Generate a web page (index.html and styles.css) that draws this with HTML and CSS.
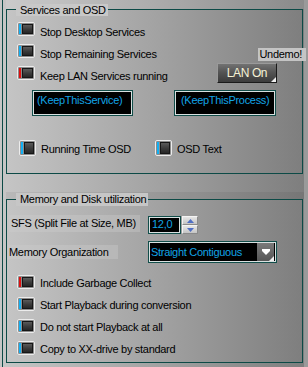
FILE: index.html
```html
<!DOCTYPE html>
<html>
<head>
<meta charset="utf-8">
<link rel="stylesheet" href="styles.css">
</head>
<body>
<div class="frame">
  <div class="band band-top"></div>
  <div class="group group-one">
    <div class="legend">Services and OSD</div>
    <div class="row first-row">
      <span class="cb"></span><span class="lbl">Stop Desktop Services</span>
    </div>
    <div class="row">
      <span class="cb"></span><span class="lbl">Stop Remaining Services</span>
      <span class="undemo">Undemo!</span>
    </div>
    <div class="row">
      <span class="cb red"></span><span class="lbl">Keep LAN Services running</span>
      <span class="lan-btn">LAN On<i class="corner"></i></span>
    </div>
    <div class="keep-row">
      <div class="blackbox keep1">(KeepThisService)</div>
      <div class="blackbox keep2">(KeepThisProcess)</div>
    </div>
    <div class="osd-row">
      <div class="osd-item osd-first"><span class="cb big"></span><span class="lbl">Running Time OSD</span></div>
      <div class="osd-item"><span class="cb big"></span><span class="lbl">OSD Text</span></div>
    </div>
  </div>
  <div class="gap"></div>
  <div class="band band-mid"></div>
  <div class="group group-two">
    <div class="legend legend-two">Memory and Disk utilization</div>
    <div class="field-row sfs-row">
      <span class="flabel sfs-label">SFS (Split File at Size, MB)</span>
      <div class="spin-edit">
        <div class="blackbox spin-val">12,0</div>
        <div class="spin-btns">
          <span class="spin-btn"><svg width="7" height="4" viewBox="0 0 7 4"><polygon points="0,4 3.5,0 7,4" fill="#4f6fc4"/></svg></span>
          <span class="spin-btn"><svg width="7" height="4" viewBox="0 0 7 4"><polygon points="0,0 7,0 3.5,4" fill="#4f6fc4"/></svg></span>
        </div>
      </div>
    </div>
    <div class="field-row mem-row">
      <span class="flabel mem-label">Memory Organization</span>
      <div class="blackbox combo">
        <span class="combo-text">Straight Contiguous</span>
        <span class="combo-btn"><svg width="8" height="6" viewBox="0 0 8 6"><polygon points="0,0 8,0 8,2 4,6 0,2" fill="#ffffff"/></svg><i class="corner"></i></span>
      </div>
    </div>
    <div class="checks">
      <div class="row"><span class="cb red"></span><span class="lbl">Include Garbage Collect</span></div>
      <div class="row"><span class="cb"></span><span class="lbl">Start Playback during conversion</span></div>
      <div class="row"><span class="cb"></span><span class="lbl">Do not start Playback at all</span></div>
      <div class="row"><span class="cb"></span><span class="lbl">Copy to XX-drive by standard</span></div>
    </div>
  </div>
</div>
</body>
</html>
```
FILE: styles.css
```css
html, body {
  margin: 0;
  padding: 0;
}
body {
  width: 308px;
  height: 367px;
  overflow: hidden;
  background: linear-gradient(90deg, #c6c6c6 0px, #a4a4a4 150px, #7e7e7e 304px, #9a9a9a 304px);
  font-family: "Liberation Sans", Arial, sans-serif;
  font-size: 11px;
  letter-spacing: -0.3px;
  color: #000;
  line-height: 13px;
}
.frame {
  margin-left: 2px;
  border-left: 1px solid #0c4a46;
  height: 367px;
  padding-left: 3px;
  box-sizing: border-box;
}
.band {
  width: 298px;
  background: rgba(255, 255, 255, 0.1);
}
.band-top {
  height: 9px;
}
.band-mid {
  height: 7px;
  background: rgba(0, 0, 0, 0.06);
}
.gap {
  height: 18px;
}
.group {
  width: 297px;
  box-sizing: border-box;
  border: 1px solid #0c4a46;
}
.group-one {
  height: 165px;
}
.group-two {
  height: 164px;
}
.legend {
  display: block;
  width: max-content;
  margin-top: -6px;
  margin-left: 9px;
  height: 12px;
  padding: 0 2px 0 4px;
  background: #c8c8c8;
  line-height: 12px;
}
.legend-two {
  margin-top: -7px;
  height: 13px;
  line-height: 13px;
  background: #c6c6c6;
}
.row {
  display: flex;
  align-items: center;
  height: 22px;
  padding-left: 10px;
}
.first-row {
  margin-top: 2px;
}
.lbl {
  margin-left: 5px;
  padding-top: 6px;
  white-space: nowrap;
}
.cb {
  box-sizing: border-box;
  width: 18px;
  height: 14px;
  border: 1px solid #ececec;
  border-radius: 2px;
  background: #8c8c8c;
  display: flex;
  padding: 1px;
  flex: none;
}
.cb::before {
  content: "";
  width: 2px;
  background: #12b0f4;
}
.cb.red::before {
  background: #e01010;
}
.cb::after {
  content: "";
  flex: 1;
  margin-left: 1px;
  border: 1px solid #161616;
  background: linear-gradient(180deg, #5a5a5a 0%, #3a3a3a 55%, #262626 100%);
}
.cb.big {
  width: 17px;
  height: 16px;
}
.undemo {
  margin-left: auto;
  margin-right: -4px;
  align-self: flex-start;
  margin-top: 8px;
  height: 13px;
  line-height: 13px;
  padding: 0 4px 0 1px;
  background: #c4c4c4;
  position: relative;
}
.lan-btn {
  position: relative;
  margin-left: auto;
  margin-right: 25px;
  box-sizing: border-box;
  width: 60px;
  height: 20px;
  border: 1px solid #1a1a1a;
  border-top-color: #9a9a9a;
  border-left-color: #9a9a9a;
  background: linear-gradient(180deg, #727272 0%, #525252 50%, #3c3c3c 100%);
  color: #f6f2d6;
  font-size: 12px;
  letter-spacing: -0.4px;
  text-align: center;
  line-height: 18px;
}
.corner {
  position: absolute;
  right: 0;
  bottom: 0;
  width: 0;
  height: 0;
  border-left: 5px solid transparent;
  border-bottom: 5px solid #f0f0f0;
}
.keep-row {
  display: flex;
  margin-top: 6px;
  margin-left: 25px;
  gap: 41px;
}
.blackbox {
  box-sizing: border-box;
  background: #000;
  border: 1px solid #124e4a;
  box-shadow: inset 0 0 0 1px #d8e0e0;
  color: #12a4e6;
}
.keep-row .blackbox {
  height: 26px;
  padding: 3px 0 0 4px;
}
.keep1 {
  width: 101px;
}
.keep2 {
  width: 102px;
  padding-left: 6px !important;
}
.osd-row {
  display: flex;
  margin-top: 21px;
  height: 22px;
  padding-left: 12px;
}
.osd-item {
  display: flex;
  align-items: center;
}
.osd-first {
  width: 136px;
}
.osd-row .lbl {
  padding-top: 2px;
}
.field-row {
  display: flex;
  align-items: center;
  margin-left: 2px;
}
.sfs-row {
  margin-top: 6px;
  height: 22px;
}
.flabel {
  background: rgba(205, 205, 205, 0.35);
  white-space: nowrap;
  padding-left: 2px;
}
.sfs-label {
  width: 131px;
  height: 17px;
  line-height: 17px;
  box-sizing: border-box;
}
.spin-edit {
  display: flex;
  margin-left: 8px;
  margin-top: 4px;
}
.spin-val {
  width: 33px;
  height: 18px;
  line-height: 15px;
  padding-left: 3px;
}
.spin-btns {
  display: flex;
  flex-direction: column;
  width: 16px;
  height: 18px;
  margin-left: 1px;
}
.spin-btn {
  flex: 1;
  box-sizing: border-box;
  display: flex;
  align-items: center;
  justify-content: center;
  background: linear-gradient(180deg, #e6e6e6, #c4c4c4);
  border: 1px solid #f4f4f4;
  border-right-color: #8a8a8a;
  border-bottom-color: #8a8a8a;
}
.mem-row {
  margin-top: 6px;
  height: 23px;
}
.mem-label {
  width: 110px;
  height: 14px;
  line-height: 14px;
  box-sizing: border-box;
  padding-left: 1px;
  margin-left: -1px;
}
.combo {
  margin-left: 30px;
  width: 129px;
  height: 22px;
  display: flex;
  align-items: center;
  padding: 0 2px 0 2px;
}
.combo-text {
  flex: 1;
  padding-top: 1px;
}
.combo-btn {
  position: relative;
  width: 17px;
  height: 18px;
  display: flex;
  align-items: center;
  justify-content: center;
  background: linear-gradient(180deg, #7a7a7a, #565656);
}
.checks {
  margin-top: 8px;
}
.checks .lbl {
  padding-top: 2px;
}
```
